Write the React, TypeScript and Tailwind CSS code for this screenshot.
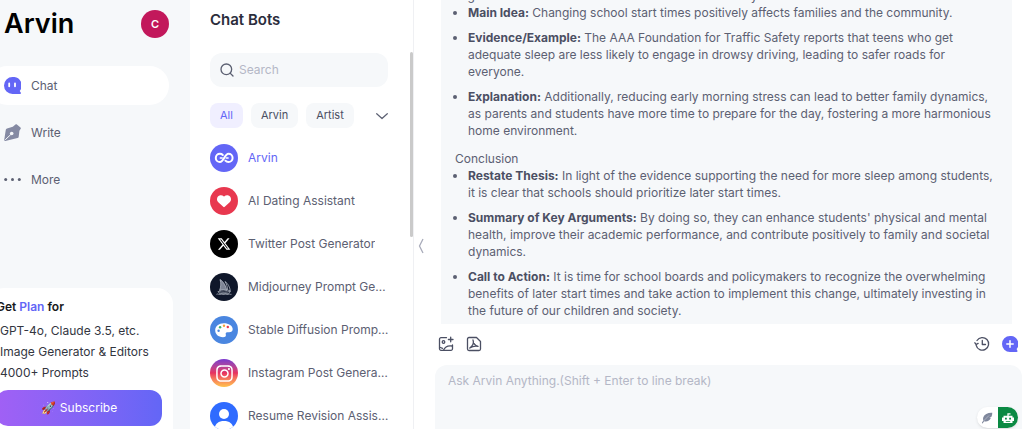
import React from 'react'
import { Search } from 'lucide-react'
import { FaHeart, FaInstagram, FaXTwitter } from 'react-icons/fa6'

const bots = [
  { id: 'arvin', name: 'Arvin', active: true },
  { id: 'dating', name: 'AI Dating Assistant' },
  { id: 'twitter', name: 'Twitter Post Generator' },
  { id: 'midjourney', name: 'Midjourney Prompt Generator' },
  { id: 'diffusion', name: 'Stable Diffusion Prompt Generator' },
  { id: 'instagram', name: 'Instagram Post Generator' },
  { id: 'resume', name: 'Resume Revision Assistant' },
]

const bodyPoints = [
  { title: 'Main Idea:', text: 'Changing school start times positively affects families and the community.' },
  {
    title: 'Evidence/Example:',
    text: 'The AAA Foundation for Traffic Safety reports that teens who get adequate sleep are less likely to engage in drowsy driving, leading to safer roads for everyone.',
  },
  {
    title: 'Explanation:',
    text: 'Additionally, reducing early morning stress can lead to better family dynamics, as parents and students have more time to prepare for the day, fostering a more harmonious home environment.',
  },
]

const conclusionPoints = [
  {
    title: 'Restate Thesis:',
    text: 'In light of the evidence supporting the need for more sleep among students, it is clear that schools should prioritize later start times.',
  },
  {
    title: 'Summary of Key Arguments:',
    text: "By doing so, they can enhance students' physical and mental health, improve their academic performance, and contribute positively to family and societal dynamics.",
  },
  {
    title: 'Call to Action:',
    text: 'It is time for school boards and policymakers to recognize the overwhelming benefits of later start times and take action to implement this change, ultimately investing in the future of our children and society.',
  },
]

const BotIcon = ({ id }: { id: string }) => {
  const base = 'flex size-7 shrink-0 items-center justify-center rounded-full text-white overflow-hidden'
  switch (id) {
    case 'arvin':
      return (
        <span className={`${base} bg-[#6366f6]`}>
          <svg viewBox="0 0 28 28" className="size-7" fill="none" stroke="currentColor" strokeWidth="2" strokeLinecap="round">
            <path d="M12.800 11C12 10.200 11 9.800 9.900 9.800a4.100 4.100 0 0 0 0 8.200c4.200 0 4.600-8.200 8.600-8.200a4.100 4.100 0 0 1 0 8.200c-1.300 0-2.300-.4-3.100-1.300" />
            <path d="M10.300 13.900h1.900M16.200 13.900h1.900" strokeWidth="1.500" />
          </svg>
        </span>
      )
    case 'dating':
      return <span className={`${base} bg-[#e8384f]`}><FaHeart className="size-3.5" /></span>
    case 'twitter':
      return <span className={`${base} bg-black`}><FaXTwitter className="size-3.5" /></span>
    case 'midjourney':
      return (
        <span className={`${base} bg-[#0f172a]`}>
          <svg viewBox="0 0 28 28" className="size-7" fill="none" stroke="#c3c8d3" strokeWidth=".7" strokeLinejoin="round">
            <path d="M10 6.500c3.500 2 6 6.500 6.800 11-2.300-.8-5-.7-7.300 0C11 14 11.200 10 10 6.500Z" fill="#7d8495" />
            <path d="M15 8.500c3 2 4.800 5.500 5.300 9.200-1-.4-1.800-.5-2.700-.4 0-3-1-6.300-2.600-8.800Z" />
            <path d="M8 18.500c4.500 1 8.500 1 12.500-.2-.6 1.200-1.300 1.700-2.200 2.400H10c-.9-.5-1.500-1.300-2-2.200Z" />
            <path d="M6.500 21.300c1.500-1 2.500.8 4 0s2.500.8 4 0 2.500.8 4 0 2 .6 3 0" />
          </svg>
        </span>
      )
    case 'diffusion':
      return (
        <span className={`${base} bg-[#4a86e0]`}>
          <svg viewBox="0 0 28 28" className="size-7">
            <path d="M13.800 7.200c-5 0-8.600 3-8.600 7.100 0 3.800 3 6.900 7.800 6.900 2 0 2.900-.7 2.900-1.900 0-1-.4-1.500-.1-2.300.3-.8 1.100-1 2.200-.8 2.700.4 4.700-.6 4.700-3.100 0-3.300-4-5.900-8.900-5.900Z" fill="#fff" />
            <circle cx="8.600" cy="14.800" r="1.200" fill="#4a86e0" />
            <circle cx="10.100" cy="11.200" r="1.200" fill="#3cb371" />
            <circle cx="14" cy="9.700" r="1.200" fill="#f2a33a" />
            <circle cx="17.800" cy="11" r="1.200" fill="#e8384f" />
          </svg>
        </span>
      )
    case 'instagram':
      return (
        <span className={`${base} bg-linear-to-b from-[#7a35cf] via-[#e8305f] to-[#ffc24a]`}>
          <FaInstagram className="size-[19px]" />
        </span>
      )
    default:
      return (
        <span className={`${base} bg-[#2f6bff]`}>
          <svg viewBox="0 0 28 28" className="size-7" fill="#fff">
            <circle cx="14" cy="12" r="5" />
            <path d="M4.500 28c0-6 4-9 9.500-9s9.500 3 9.500 9Z" />
          </svg>
        </span>
      )
  }
}

const Points = ({ items }: { items: { title: string; text: string }[] }) => (
  <ul className="list-disc space-y-2 pl-[13px]">
    {items.map((item) => (
      <li key={item.title}>
        <strong className="font-bold text-[#4b4f63]">{item.title}</strong> {item.text}
      </li>
    ))}
  </ul>
)

const Sidebar = () => (
  <aside className="flex w-[190px] shrink-0 flex-col overflow-hidden bg-[#f6f8fa]">
    <header className="flex items-center justify-between pt-2 pr-[21px] pl-1">
      <h1 className="text-[27px] leading-8 font-semibold text-black">Arvin</h1>
      <button className="size-7 rounded-full bg-[#c2185b] text-[11px] font-semibold text-white">C</button>
    </header>

    <nav className="-ml-3 flex flex-col gap-2 pt-[26px] pr-[21px] text-xs text-[#5c6072]">
      <a href="#chat" className="flex h-[39px] items-center gap-[10px] rounded-[20px] bg-white pl-4">
        <svg viewBox="0 0 17 17" className="size-[17px]">
          <path d="M8.500 0a8.500 8.500 0 1 0 0 17H16c1 0 1.300-.8.700-1.500l-1-1.500A8.500 8.500 0 0 0 8.500 0Z" fill="#6366f6" />
          <path d="M5.200 6.500v2.800M11 6.500v2.800" stroke="#fff" strokeWidth="1.800" strokeLinecap="round" />
        </svg>
        Chat
      </a>
      <a href="#write" className="flex h-[39px] items-center gap-[10px] pl-4">
        <svg viewBox="0 0 17 17" className="size-[17px]">
          <path d="M11.500.4c.5-.4 1-.3 1.400 0l3.600 3c.4.4.5.9.2 1.300l-1.300 2-.7 6c-.1.700-.5 1.200-1.200 1.400L1.300 16.900c-.7.200-1.200-.3-1.100-1L1.800 5.800c.1-.7.600-1.200 1.200-1.400l5.800-1.700Z" fill="#858aa3" />
          <path d="m1.200 15.800 5.600-5.300" stroke="#f6f8fa" strokeWidth="1" />
          <circle cx="7.700" cy="9.500" r="1.800" fill="#f6f8fa" />
        </svg>
        Write
      </a>
      <a href="#more" className="flex h-[39px] items-center gap-[10px] pl-4">
        <svg viewBox="0 0 17 17" className="size-[17px]" fill="#5c6072">
          <circle cx="1.700" cy="8.500" r="1.500" />
          <circle cx="8.500" cy="8.500" r="1.500" />
          <circle cx="15.300" cy="8.500" r="1.500" />
        </svg>
        More
      </a>
    </nav>

    <section className="mt-auto -ml-3 mr-[17px] rounded-t-2xl bg-white pt-[9px] pr-[11px] pb-[3px] pl-2 text-xs text-[#33363f]">
      <h2 className="leading-5 font-semibold text-[#17181c]">
        Get <span className="text-[#6366f6]">Plan</span> for
      </h2>
      <ul className="pt-[3px] pl-1 leading-[21px]">
        <li>GPT-4o, Claude 3.5, etc.</li>
        <li>Image Generator &amp; Editors</li>
        <li>4000+ Prompts</li>
      </ul>
      <button className="mt-[7px] flex h-9 w-full items-center justify-center gap-1 rounded-xl bg-linear-to-r from-[#a160f5] to-[#6366f6] text-white">
        <span>🚀</span> Subscribe
      </button>
    </section>
  </aside>
)

const BotList = () => (
  <section className="flex w-[224px] shrink-0 border-r border-[#eff0f3]">
    <div className="min-w-0 flex-1 pt-2 pl-5">
      <h2 className="text-[15px] leading-6 font-semibold text-[#2b2d3c]">Chat Bots</h2>
      <label className="mt-[21px] mr-[22px] flex h-[34px] items-center gap-1 rounded-xl bg-[#f6f8fa] px-[9px]">
        <Search className="size-4 shrink-0 text-[#5c6072]" />
        <input
          type="text"
          aria-label="Search"
          placeholder="Search"
          className="w-full min-w-0 bg-transparent text-xs outline-none placeholder:text-[#b4b7c6]"
        />
      </label>
      <div className="mt-4 mr-[22px] flex items-center gap-2 text-[11px] text-[#4b4f63]">
        <button className="h-[25px] rounded-lg bg-[#f0efff] px-[10px] text-[#6366f6]">All</button>
        <button className="h-[25px] rounded-lg bg-[#f6f8fa] px-[10px]">Arvin</button>
        <button className="h-[25px] rounded-lg bg-[#f6f8fa] px-[10px]">Artist</button>
        <button aria-label="Show all categories" className="ml-auto">
          <svg viewBox="0 0 12 8" className="h-2 w-3" fill="none" stroke="#5c6072" strokeWidth="1.200" strokeLinecap="round" strokeLinejoin="round">
            <path d="m.700 1.700 5.300 4.800 5.300-4.800" />
          </svg>
        </button>
      </div>
      <ul className="mt-4 mr-5 space-y-[15px] text-xs">
        {bots.map((bot) => (
          <li key={bot.id}>
            <a href={`#${bot.id}`} className="flex items-center gap-[10px]">
              <BotIcon id={bot.id} />
              <span className={bot.active ? 'truncate text-[#6366f6]' : 'truncate text-[#5c6072]'}>{bot.name}</span>
            </a>
          </li>
        ))}
      </ul>
    </div>
    <div className="mt-[52px] h-[185px] w-[3px] rounded-full bg-[#cacaca]" />
  </section>
)

const Conversation = () => (
  <main className="flex min-w-0 flex-1">
    <button aria-label="Collapse list" className="mt-[62px] w-[13px] shrink-0">
      <svg viewBox="0 0 6 16" className="mx-auto h-4 w-[6px]" fill="none" stroke="#a9acba" strokeWidth="1.300">
        <path d="M5 1 1.500 8 5 15" />
      </svg>
    </button>
    <div className="flex min-w-0 flex-1 flex-col pl-2">
      <article className="mr-3 ml-[6px] flex h-[324px] shrink-0 flex-col justify-end overflow-hidden bg-[#f6f8fa] px-[14px] pb-[5px] text-xs leading-[17px] text-[#5c6072]">
        <p>Argument 3: Benefits for Families and the Community</p>
        <Points items={bodyPoints} />
        <p className="pt-[11px]">Conclusion</p>
        <Points items={conclusionPoints} />
      </article>
      <div className="mb-[2px] flex h-[39px] shrink-0 items-center gap-3 pr-[6px] pl-[3px] text-[#4b4f63]">
        <button aria-label="Add image">
          <svg viewBox="0 0 16 16" className="size-4" fill="none" stroke="currentColor" strokeWidth="1.300" strokeLinecap="round" strokeLinejoin="round">
            <path d="M8.500 1.700H3a1.500 1.500 0 0 0-1.500 1.500v9.600A1.500 1.500 0 0 0 3 14.300h10a1.500 1.500 0 0 0 1.500-1.500V9M12.700 1.200v4.600M10.400 3.500H15" />
            <circle cx="5.500" cy="6" r="1.300" />
            <path d="M5.500 14.200c1.500-3.500 4.500-5 8.800-4.200M2.500 11.500l2 .8" />
          </svg>
        </button>
        <button aria-label="Add PDF">
          <svg viewBox="0 0 16 16" className="size-4" fill="none" stroke="currentColor" strokeWidth="1.300" strokeLinecap="round" strokeLinejoin="round">
            <path d="M10.500 1.500H3A1.500 1.500 0 0 0 1.500 3v10A1.500 1.500 0 0 0 3 14.500h10a1.500 1.500 0 0 0 1.500-1.500V5.500Z" />
            <path d="M7 4c1.200 3-.6 6-3.200 8 2.200-1.500 5-2.200 8.200-1.700C9.300 9.500 7.300 7.300 7 4Z" />
          </svg>
        </button>
        <button aria-label="History" className="ml-auto">
          <svg viewBox="0 0 16 16" className="size-4" fill="none" stroke="currentColor" strokeWidth="1.300" strokeLinecap="round" strokeLinejoin="round">
            <path d="M3 4.500a6.300 6.300 0 1 1-.8 4.800M8.300 4.500v4h3.200" />
            <path d="m.9 6.800 1.300 1.700 1.900-1.100" />
          </svg>
        </button>
        <button aria-label="New chat">
          <svg viewBox="0 0 16 16" className="size-4">
            <path d="M8 0a8 8 0 1 0 0 16h6.500c1 0 1.300-.8.800-1.500l-.7-1.400A8 8 0 0 0 8 0Z" fill="#6366f6" />
            <path d="M8 4.800v6.400M4.800 8h6.400" stroke="#fff" strokeWidth="1.500" strokeLinecap="round" />
          </svg>
        </button>
      </div>
      <textarea
        aria-label="Message"
        placeholder="Ask Arvin Anything.(Shift + Enter to line break)"
        className="mr-[2px] min-h-0 flex-1 resize-none rounded-t-xl bg-[#f6f8fa] px-[13px] pt-2 text-xs leading-4 outline-none placeholder:text-[#b4b7c6]"
      />
    </div>
  </main>
)

const App = () => {
  return (
    <div className="flex h-screen overflow-hidden bg-white font-['Inter',sans-serif]">
      <Sidebar />
      <BotList />
      <Conversation />
      <div className="fixed right-[6px] bottom-px flex h-[21px] w-[41px] overflow-hidden rounded-full bg-white shadow">
        <button aria-label="Writing tools" className="flex flex-1 items-center justify-center">
          <svg viewBox="0 0 12 12" className="size-3">
            <path d="M11.300.8C7 .5 3.500 2.200 2.400 5c-.5 1.300-.4 2.600 0 3.300L.8 11l.8.400 1.500-2.200c3 .7 5.700-.6 6.700-3.200l-1.500-.2 2-.9c.700-1.200 1-2.600 1-4.100Z" fill="#7f879c" />
            <path d="m2.500 9 5.500-5.500" stroke="#c9cdd8" strokeWidth=".6" />
          </svg>
        </button>
        <button aria-label="Assistant" className="flex flex-1 items-center justify-center bg-[#0b8a43]">
          <svg viewBox="0 0 14 14" className="size-[14px]">
            <path d="M7 5V2.800h2.500" fill="none" stroke="#fff" strokeWidth="1.300" />
            <path d="M2.500 4.800h9v1.700H13v3.500h-1.500V12h-9v-2H1V6.500h1.500Z" fill="#fff" />
            <path d="M4 6.800h1.800v1.800H4zM8.200 6.800H10v1.800H8.200zM4.800 10h4.400v.8H4.800z" fill="#0b8a43" />
          </svg>
        </button>
      </div>
    </div>
  )
}

export default App;
